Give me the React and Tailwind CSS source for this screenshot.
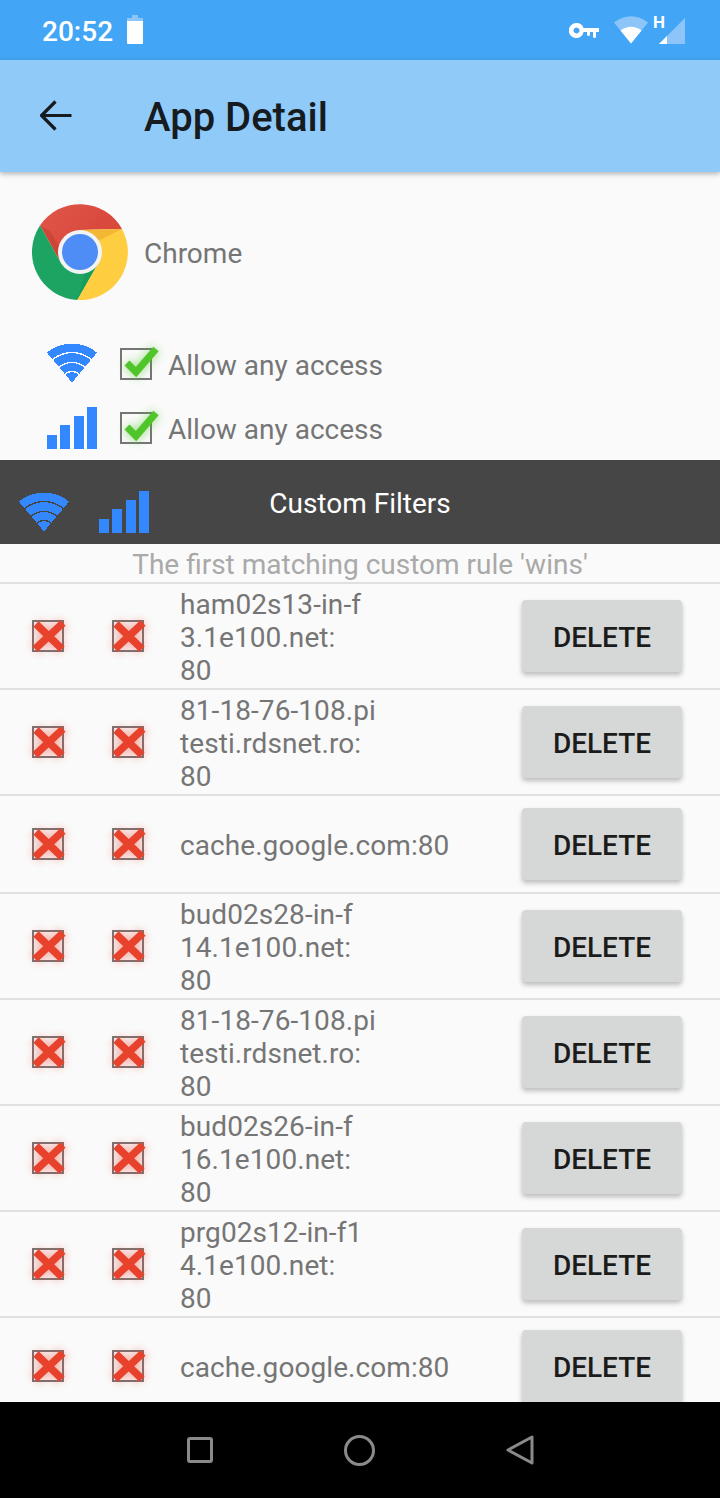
const FONT = "font-['Roboto',sans-serif]";

function band(cx, cy, r0, r1, deg = 40) {
  const a = (deg * Math.PI) / 180;
  const s = Math.sin(a);
  const c = Math.cos(a);
  const p = (r) => [cx - r * s, cy - r * c, cx + r * s, cy - r * c].map((n) => n.toFixed(2));
  const [ox0, oy0, ox1, oy1] = p(r1);
  if (r0 === 0) return `M${cx} ${cy}L${ox0} ${oy0}A${r1} ${r1} 0 0 1 ${ox1} ${oy1}Z`;
  const [ix0, iy0, ix1, iy1] = p(r0);
  return `M${ox0} ${oy0}A${r1} ${r1} 0 0 1 ${ox1} ${oy1}L${ix1} ${iy1}A${r0} ${r0} 0 0 0 ${ix0} ${iy0}Z`;
}

function WifiIcon({ className }) {
  const bands = [[0, 10.3], [11.7, 19.3], [20.7, 29.3], [30.7, 39]];
  return (
    <svg viewBox="0 0 52 40" className={className} shapeRendering="crispEdges">
      {bands.map(([a, b]) => (
        <path key={a} d={band(26, 39.5, a, b)} fill="#3388ff" />
      ))}
    </svg>
  );
}

function CellIcon({ className }) {
  return (
    <svg viewBox="0 0 50 42" className={className} fill="#3388ff">
      <rect x="0" y="28" width="10" height="14" />
      <rect x="13" y="18" width="10" height="24" />
      <rect x="27" y="9" width="10" height="33" />
      <rect x="40" y="0" width="10" height="42" />
    </svg>
  );
}

function CheckBox() {
  return (
    <div className="relative w-8 h-8 border-2 border-[#757575] shrink-0">
      <svg viewBox="0 0 48 48" className="absolute -left-2 -top-2 w-12 h-12 overflow-visible">
        <path d="M13 21L22 30L42 7" fill="none" stroke="#4fc52a" strokeWidth="11" opacity="0.4" style={{ filter: "blur(4px)" }} />
        <path d="M13 21L22 30L42 7" fill="none" stroke="#4fc52a" strokeWidth="7" />
      </svg>
    </div>
  );
}

function CrossBox() {
  return (
    <div className="relative w-8 h-8 border-2 border-[#757575] shrink-0">
      <svg viewBox="0 0 48 48" className="absolute -left-2 -top-2 w-12 h-12 overflow-visible">
        <path d="M9 35L37 9M10 10L36 35" fill="none" stroke="#e8412c" strokeWidth="13" opacity="0.35" style={{ filter: "blur(4px)" }} />
        <path d="M9 35L37 9M10 10L36 35" fill="none" stroke="#e8412c" strokeWidth="7.500" />
      </svg>
    </div>
  );
}

function ChromeLogo() {
  return (
    <svg viewBox="0 0 96 96" className="w-24 h-24 shrink-0">
      <defs>
        <linearGradient id="rs" x1="0" y1="0.1" x2="0.6" y2="0.5">
          <stop offset="0" stopColor="#e0564a" />
          <stop offset="1" stopColor="#d94a3d" />
        </linearGradient>
        <linearGradient id="gs" x1="0.35" y1="0.4" x2="0.9" y2="0.9">
          <stop offset="0.55" stopColor="#0f9d58" />
          <stop offset="1" stopColor="#0b6b3c" />
        </linearGradient>
      </defs>
      <path d="M8 21.5A48 48 0 0 1 90 25L48 26L29 59Z" fill="url(#rs)" />
      <path d="M8 21.5L29 59L28 44L18 27Z" fill="#a52714" opacity="0.25" />
      <path d="M8 21.5A48 48 0 0 0 45.3 96L67 58L29 59Z" fill="#1da462" />
      <path d="M45.3 96L67 58L58 62L52 72Z" fill="url(#gs)" opacity="0.7" />
      <path d="M90 25A48 48 0 0 1 45.3 96L67 58L48 26Z" fill="#ffcd40" />
      <path d="M90 25L48 26L66 37Z" fill="#e8a62c" opacity="0.55" />
      <circle cx="48" cy="48" r="22" fill="#f1f3f4" />
      <circle cx="48" cy="48" r="18" fill="#4e8df5" />
    </svg>
  );
}

const rows = [
  ["ham02s13-in-f", "3.1e100.net:", "80"],
  ["81-18-76-108.pi", "testi.rdsnet.ro:", "80"],
  ["cache.google.com:80"],
  ["bud02s28-in-f", "14.1e100.net:", "80"],
  ["81-18-76-108.pi", "testi.rdsnet.ro:", "80"],
  ["bud02s26-in-f", "16.1e100.net:", "80"],
  ["prg02s12-in-f1", "4.1e100.net:", "80"],
  ["cache.google.com:80"],
];

function Row({ lines }) {
  return (
    <div className="flex items-center border-t-2 border-[#e0e0e0] pl-8 pr-[38px] shrink-0">
      <CrossBox />
      <div className="ml-12">
        <CrossBox />
      </div>
      <div className="ml-9 flex-1 pt-[4px] pb-[1px] text-[28px] leading-[33px] tracking-[0.07px] text-[#757575] whitespace-nowrap">
        {lines.map((l, i) => (
          <div key={i}>{l}</div>
        ))}
      </div>
      <button className="my-3 w-40 h-[72px] pt-[4px] rounded bg-[#d6d7d7] text-[28px] font-medium text-[#1b1b1b] shadow-[0_3px_5px_rgba(0,0,0,0.25)]">
        DELETE
      </button>
    </div>
  );
}

export default function App() {
  return (
    <div className={`${FONT} w-[720px] h-[1498px] flex flex-col bg-[#fafafa] overflow-hidden`}>
      <div className="h-[60px] shrink-0 bg-[#42a5f5] flex items-center pl-[42px] pr-[35px] text-white">
        <span className="text-[28px] font-medium leading-none mt-[4px]">20:52</span>
        <svg viewBox="0 0 16 29" className="w-4 h-[29px] ml-[14px] mt-[-1px]">
          <path d="M5 0H11V3H16V8H0V3H5Z" fill="#8ec5f9" />
          <path d="M0 6H16V28a1 1 0 0 1-1 1H1a1 1 0 0 1-1-1Z" fill="#fff" />
        </svg>
        <div className="ml-auto flex items-start relative h-[60px] w-[116px]">
          <svg viewBox="0 0 30 15" className="absolute left-0 top-[23px] w-[30px] h-[15px]">
            <path fillRule="evenodd" d="M7.5 0A7.5 7.5 0 0 1 14.6 5H30V9H27V13.500a1.500 1.500 0 0 1-3 0V9H21V11.500a1.500 1.500 0 0 1-3 0V9H14.600A7.500 7.500 0 1 1 7.500 0ZM7.500 4.500a3 3 0 1 0 .01 0Z" fill="#fff" />
          </svg>
          <svg viewBox="0 0 34 28" className="absolute left-[45px] top-[16px] w-[34px] h-[28px]">
            <path d="M0 6.500Q17 -6 34 6.500L17 27.500Z" fill="#8ec5f9" />
            <path d="M6.500 14.500Q17 7 27.500 14.500L17 27.500Z" fill="#fff" />
          </svg>
          <span className="absolute left-[84px] top-[14px] text-[17px] font-bold leading-[17px]">H</span>
          <svg viewBox="0 0 26 26" className="absolute left-[90px] top-[18px] w-[26px] h-[26px]">
            <path d="M26 0V26H0Z" fill="#8ec5f9" />
            <path d="M8 18V26H0Z" fill="#fff" />
          </svg>
        </div>
      </div>

      <div className="relative z-10 h-[112px] shrink-0 bg-[#90caf9] flex items-center pl-10 shadow-[0_2px_5px_rgba(0,0,0,0.28)]">
        <svg viewBox="0 0 32 32" className="w-8 h-8 shrink-0">
          <path d="M31.500 15.500H3M15.500 1.500L1.500 15.500L15.500 29.500" fill="none" stroke="#161b1f" strokeWidth="3.200" />
        </svg>
        <span className="ml-[72px] text-[40px] font-medium text-[#161b1f] leading-none mt-[3px]">App Detail</span>
      </div>

      <div className="flex-1 min-h-0 overflow-hidden flex flex-col">
        <div className="h-[288px] shrink-0 pt-8">
          <div className="flex items-center pl-8">
            <ChromeLogo />
            <span className="ml-4 text-[28px] text-[#757575] leading-none mt-[4px]">Chrome</span>
          </div>
          <div className="mt-[34px] flex items-center h-[60px]">
            <div className="w-[120px] pl-[46px] shrink-0">
              <WifiIcon className="w-[52px] h-10 mt-[-2px]" />
            </div>
            <CheckBox />
            <span className="ml-4 text-[28px] text-[#757575] leading-none mt-[4px]">Allow any access</span>
          </div>
          <div className="mt-[4px] flex items-center h-[60px]">
            <div className="w-[120px] pl-[47px] shrink-0">
              <CellIcon className="w-[50px] h-[42px]" />
            </div>
            <CheckBox />
            <span className="ml-4 text-[28px] text-[#757575] leading-none mt-[4px]">Allow any access</span>
          </div>
        </div>

        <div className="relative h-[84px] shrink-0 bg-[#464646] flex items-center justify-center text-white text-[28px] pt-[4px]">
          <span>Custom Filters</span>
          <WifiIcon className="absolute left-[18px] top-[32px] w-[52px] h-10" />
          <CellIcon className="absolute left-[99px] top-[31px] w-[50px] h-[42px]" />
        </div>

        <div className="h-[38px] shrink-0 flex items-center justify-center text-[28px] text-[#a9a9a9] pt-[4px]">
          The first matching custom rule 'wins'
        </div>

        {rows.map((lines, i) => (
          <Row key={i} lines={lines} />
        ))}
      </div>

      <div className="h-24 shrink-0 bg-black flex items-center justify-center gap-[131px]">
        <div className="w-[26px] h-[26px] border-[3px] border-[#8a8a8a] rounded-[3px]" />
        <div className="w-[31px] h-[31px] border-[3px] border-[#8a8a8a] rounded-full" />
        <svg viewBox="0 0 28 30" className="w-7 h-[30px]">
          <path d="M2 15L26 2V28Z" fill="none" stroke="#8a8a8a" strokeWidth="3" strokeLinejoin="round" />
        </svg>
      </div>
    </div>
  );
}
